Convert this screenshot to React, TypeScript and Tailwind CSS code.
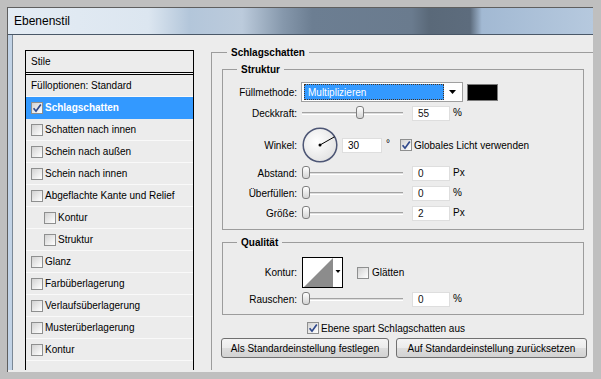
import { ReactNode } from 'react';

const FONT = "font-['Liberation_Sans',Arial,sans-serif]";

const styles: { label: string; on?: boolean; selected?: boolean; indent?: boolean }[] = [
  { label: 'Schlagschatten', on: true, selected: true },
  { label: 'Schatten nach innen' },
  { label: 'Schein nach außen' },
  { label: 'Schein nach innen' },
  { label: 'Abgeflachte Kante und Relief' },
  { label: 'Kontur', indent: true },
  { label: 'Struktur', indent: true },
  { label: 'Glanz' },
  { label: 'Farbüberlagerung' },
  { label: 'Verlaufsüberlagerung' },
  { label: 'Musterüberlagerung' },
  { label: 'Kontur' },
];

function Checkbox({ checked = false }: { checked?: boolean }) {
  return (
    <span className="flex h-[12px] w-[12px] shrink-0 items-center justify-center border border-[#8e8f8f] bg-[linear-gradient(135deg,#d2d2d2_0%,#f2f2f2_70%,#ffffff_100%)]">
      {checked && (
        <svg width="10" height="10" viewBox="0 0 10 10">
          <path d="M1.6 5.2 L4 8.2 L8.8 1.4" fill="none" stroke="#30498c" strokeWidth="1.7" />
        </svg>
      )}
    </span>
  );
}

function Label({ children }: { children: ReactNode }) {
  return <span className="w-[74px] shrink-0 text-right">{children}</span>;
}

function Slider({ value }: { value: number }) {
  return (
    <div className="relative ml-[5px] flex h-[14px] w-[101px] shrink-0 items-center">
      <div className="h-[3px] w-full border-t border-b border-t-[#a3a3a3] border-b-white bg-[#dedede]" />
      <span
        className="absolute top-0 h-[13px] w-[8px] rounded-[3px] border border-[#7e7e7e] bg-[linear-gradient(to_bottom,#ffffff,#d4d4d4)]"
        style={{ left: (value / 100) * 98 }}
      />
    </div>
  );
}

function NumField({ value, unit }: { value: string; unit: string }) {
  return (
    <div className="ml-[9px] flex items-start">
      <div className="flex h-[15px] w-[38px] items-center border border-[#dedede] bg-white pl-[5px] text-[#111]">{value}</div>
      <span className="ml-[3px]">{unit}</span>
    </div>
  );
}

function Row({ label, value, unit, slider }: { label: string; value: string; unit: string; slider: number }) {
  return (
    <div className="flex h-[16px] items-center">
      <Label>{label}</Label>
      <Slider value={slider} />
      <NumField value={value} unit={unit} />
    </div>
  );
}

export default function App() {
  return (
    <div className={`h-[379px] w-[601px] bg-[#bfbfbf] pt-[7px] pl-[7px] pr-[8px] pb-[7px] text-[10px] leading-[13px] text-black ${FONT}`}>
      <div className="flex h-full flex-col border-t border-l border-[#5f5f5f]">
        <div className="flex h-[27px] shrink-0 items-center border-b border-[#4a5868] bg-[linear-gradient(to_right,#e4ecf4_0%,#dce6f0_24%,#b3c6da_31%,#bccbdc_40%,#8698ac_47%,#6c7e92_52%,#6a7b8e_69%,#5a6979_72%,#5d6c7d_79%,#a2b9d3_81%,#b6c9de_100%)] pl-[6px] text-[12px]">
          Ebenenstil
        </div>
        <div className="flex min-h-0 flex-1">
          <div className="w-[4px] shrink-0 bg-[#c2d3e6]" />
          <div className="flex flex-1 border-l border-[#7b8896] bg-[#ececec]">
            {/* style list */}
            <div className="ml-[12px] mt-[15px] flex w-[169px] shrink-0 flex-col border-t border-l border-r border-black">
              <div className="flex h-[22px] shrink-0 items-center border-b border-black pl-[5px]">Stile</div>
              <div className="h-[2px] shrink-0 border-b border-black bg-[#f6f6f6]" />
              <div className="flex h-[22px] shrink-0 items-center border-b border-[#f9f9f9] pl-[5px]">Fülloptionen: Standard</div>
              {styles.map((s, i) => (
                <div
                  key={i}
                  className={`flex h-[22px] shrink-0 items-center gap-[2px] border-b ${
                    s.selected ? 'border-[#3399ff] bg-[#3399ff] font-bold text-white' : 'border-[#f9f9f9]'
                  } ${s.indent ? 'pl-[18px]' : 'pl-[5px]'}`}
                >
                  <Checkbox checked={s.on} />
                  <span>{s.label}</span>
                </div>
              ))}
              <div className="h-[22px] shrink-0 border-b border-[#f9f9f9]" />
            </div>

            {/* settings */}
            <fieldset className="ml-[17px] mt-[11px] flex min-w-0 flex-1 flex-col border-0 border-t border-l border-[#9c9c9c]">
              <legend className="ml-[15px] px-[4px] font-bold">Schlagschatten</legend>

              <fieldset className="ml-[10px] mr-[9px] mt-[4px] border border-[#9c9c9c] pb-[8px]">
                <legend className="ml-[14px] px-[4px] font-bold">Struktur</legend>

                <div className="mt-[6px] flex h-[20px] items-center">
                  <Label>Füllmethode:</Label>
                  <div className="ml-[4px] flex h-[20px] w-[162px] items-center border border-[#a0a0a0] bg-white pl-[2px]">
                    <div className="flex h-[16px] w-[140px] items-center border border-dotted border-[#4a3320] bg-[#3399ff] pl-[3px] text-white">
                      Multiplizieren
                    </div>
                    <svg className="ml-[5px]" width="7" height="4" viewBox="0 0 7 4">
                      <polygon points="0,0 7,0 3.5,4" fill="#000" />
                    </svg>
                  </div>
                  <div className="ml-[4px] h-[17px] w-[31px] border border-[#7a7a7a] bg-black" />
                </div>

                <div className="mt-[3px]">
                  <Row label="Deckkraft:" value="55" unit="%" slider={55} />
                </div>

                <div className="mt-[6px] flex h-[36px] items-center">
                  <Label>Winkel:</Label>
                  <svg className="ml-[5px] shrink-0" width="36" height="36" viewBox="0 0 36 36">
                    <defs>
                      <radialGradient id="dial" cx="40%" cy="40%" r="65%">
                        <stop offset="0" stopColor="#ffffff" />
                        <stop offset="1" stopColor="#e2e2e2" />
                      </radialGradient>
                    </defs>
                    <circle cx="18" cy="18" r="16.8" fill="url(#dial)" stroke="#4d5675" strokeWidth="1.5" />
                    <line x1="18" y1="18" x2="32.5" y2="9.8" stroke="#000" strokeWidth="1" />
                    <circle cx="18" cy="18" r="1.5" fill="#000" />
                  </svg>
                  <div className="ml-[4px] flex items-start">
                    <div className="flex h-[15px] w-[40px] items-center border border-[#dedede] bg-white pl-[5px]">30</div>
                    <span className="ml-[4px] -mt-[1px]">°</span>
                  </div>
                  <div className="ml-[10px] flex items-center gap-[2px]">
                    <Checkbox checked />
                    <span>Globales Licht verwenden</span>
                  </div>
                </div>

                <div className="mt-[2px] flex flex-col gap-[4px]">
                  <Row label="Abstand:" value="0" unit="Px" slider={0} />
                  <Row label="Überfüllen:" value="0" unit="%" slider={0} />
                  <Row label="Größe:" value="2" unit="Px" slider={0} />
                </div>
              </fieldset>

              <fieldset className="ml-[10px] mr-[9px] mt-[6px] border border-[#9c9c9c] pb-[7px]">
                <legend className="ml-[14px] px-[4px] font-bold">Qualität</legend>

                <div className="mt-[8px] flex h-[31px] items-center">
                  <Label>Kontur:</Label>
                  <svg className="ml-[5px] shrink-0" width="41" height="31" viewBox="0 0 41 31">
                    <rect x="0.5" y="0.5" width="40" height="30" fill="#fff" stroke="#000" />
                    <polygon points="2,30 31,1 31,30" fill="#8c8c8c" />
                    <polygon points="33.5,13 38.5,13 36,16" fill="#000" />
                  </svg>
                  <div className="ml-[14px] flex items-center gap-[3px]">
                    <Checkbox />
                    <span>Glätten</span>
                  </div>
                </div>

                <div className="mt-[3px]">
                  <Row label="Rauschen:" value="0" unit="%" slider={0} />
                </div>
              </fieldset>

              <div className="mt-[6px] flex h-[14px] items-center gap-[2px] pl-[95px]">
                <Checkbox checked />
                <span>Ebene spart Schlagschatten aus</span>
              </div>

              <div className="ml-[9px] mt-[3px] flex gap-[7px]">
                <button className="flex h-[20px] w-[168px] items-center justify-center rounded-[3px] border border-[#707070] bg-[linear-gradient(to_bottom,#f4f4f4_0%,#ebebeb_50%,#dddddd_51%,#d2d2d2_100%)]">
                  Als Standardeinstellung festlegen
                </button>
                <button className="flex h-[20px] w-[191px] items-center justify-center rounded-[3px] border border-[#707070] bg-[linear-gradient(to_bottom,#f4f4f4_0%,#ebebeb_50%,#dddddd_51%,#d2d2d2_100%)]">
                  Auf Standardeinstellung zurücksetzen
                </button>
              </div>
            </fieldset>
          </div>
        </div>
        <div className="h-[2px] shrink-0 bg-[#ececec]" />
      </div>
    </div>
  );
}
